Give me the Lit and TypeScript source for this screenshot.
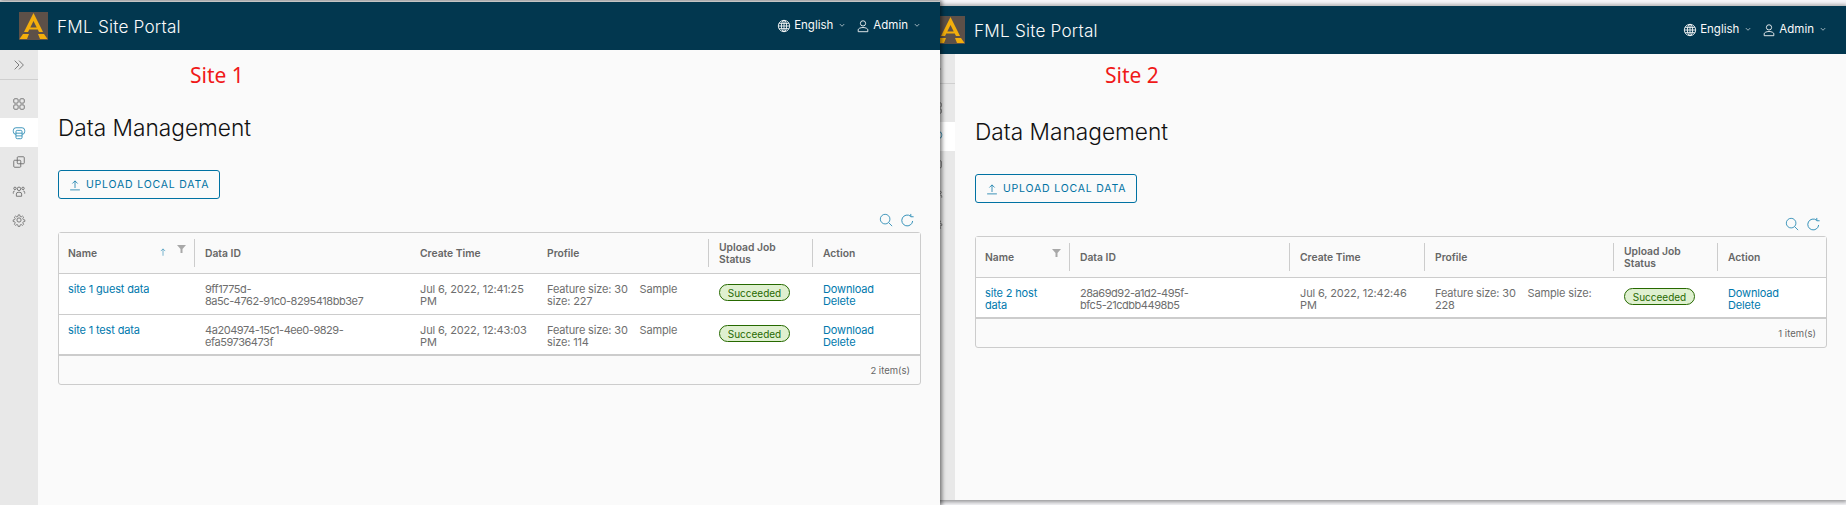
import { LitElement, html, css, svg } from "lit";
import { customElement, property } from "lit/decorators.js";

interface Row {
  name: string[];
  id: string[];
  time: string[];
  profile: string[];
}

interface Site {
  label: string;
  noteLeft: number;
  noteTop: number;
  sorted: boolean;
  columns: string;
  dividers: boolean[];
  rows: Row[];
  count: string;
}

const HEADS = ["Name", "Data ID", "Create Time", "Profile", "Upload Job Status", "Action"];

const SITE_1: Site = {
  label: "Site 1",
  noteLeft: 152,
  noteTop: 11,
  sorted: true,
  columns: "136px 215px 127px 172px 104px 1fr",
  dividers: [true, false, false, true, true, false],
  count: "2 item(s)",
  rows: [
    {
      name: ["site 1 guest data"],
      id: ["9ff1775d-", "8a5c-4762-91c0-8295418bb3e7"],
      time: ["Jul 6, 2022, 12:41:25", "PM"],
      profile: ["Feature size: 30\u00a0\u00a0\u00a0\u00a0Sample", "size: 227"],
    },
    {
      name: ["site 1 test data"],
      id: ["4a204974-15c1-4ee0-9829-", "efa59736473f"],
      time: ["Jul 6, 2022, 12:43:03", "PM"],
      profile: ["Feature size: 30\u00a0\u00a0\u00a0\u00a0Sample", "size: 114"],
    },
  ],
};

const SITE_2: Site = {
  label: "Site 2",
  noteLeft: 150,
  noteTop: 7,
  sorted: false,
  columns: "94px 220px 135px 189px 104px 1fr",
  dividers: [true, true, true, true, true, false],
  count: "1 item(s)",
  rows: [
    {
      name: ["site 2 host", "data"],
      id: ["28a69d92-a1d2-495f-", "bfc5-21cdbb4498b5"],
      time: ["Jul 6, 2022, 12:42:46", "PM"],
      profile: ["Feature size: 30\u00a0\u00a0\u00a0\u00a0Sample size:", "228"],
    },
  ],
};

const icon = (body: unknown, size = 16) => html`<svg
  width=${size}
  height=${size}
  viewBox="0 0 16 16"
  fill="none"
  stroke="currentColor"
  stroke-width="1"
>
  ${body}
</svg>`;

const ICONS = {
  expand: svg`<path d="M3 3l5 5-5 5M8 3l5 5-5 5" />`,
  grid: svg`<rect x="2" y="2" width="5" height="5" rx="1.200" /><rect x="9" y="2" width="5" height="5" rx="1.200" /><rect x="2" y="9" width="5" height="5" rx="1.200" /><rect x="9" y="9" width="5" height="5" rx="1.200" />`,
  data: svg`<path d="M4.500 2h7a3 3 0 0 1 3 3v1.500a3 3 0 0 1-3 3M4.500 2a3 3 0 0 0-3 3v1.500a3 3 0 0 0 3 3" /><rect x="4.500" y="5" width="7" height="9.500" rx="1.500" /><path d="M4.500 8.200h7M4.500 11.300h7" />`,
  copy: svg`<rect x="6" y="2" width="8" height="8" rx="1" /><rect x="2" y="6" width="8" height="8" rx="1" />`,
  users: svg`<circle cx="8" cy="5.500" r="2" /><path d="M5 14v-2.500a2 2 0 0 1 2-2h2a2 2 0 0 1 2 2V14z" /><circle cx="3.400" cy="5" r="1.400" /><circle cx="12.600" cy="5" r="1.400" /><path d="M1.500 11V9.600a1.600 1.600 0 0 1 1.600-1.600M14.500 11V9.600a1.600 1.600 0 0 0-1.600-1.600" />`,
  cog: svg`<circle cx="8" cy="8" r="2.400" /><path d="M7 1.500h2l.4 2 1.300.6 1.800-1.100 1.400 1.400-1.100 1.800.6 1.300 2 .4v2l-2 .4-.6 1.300 1.100 1.800-1.400 1.400-1.800-1.100-1.300.6-.4 2H7l-.4-2-1.300-.6-1.800 1.100-1.400-1.400 1.100-1.800-.6-1.300-2-.4v-2l2-.4.6-1.300L2.100 4.400l1.400-1.400 1.800 1.100 1.300-.6z" transform="translate(.8 .8) scale(.9)" />`,
  globe: svg`<circle cx="8" cy="8" r="6.500" /><ellipse cx="8" cy="8" rx="3" ry="6.500" /><path d="M8 1.500v13M1.500 8h13M2.400 5h11.200M2.400 11h11.200" />`,
  user: svg`<circle cx="8" cy="5" r="3" /><path d="M2.500 14.500v-2.200c0-1.200 2.400-2.600 5.500-2.600s5.500 1.400 5.500 2.600v2.200z" />`,
  chevron: svg`<path d="M4.500 6.500L8 10l3.500-3.500" />`,
  upload: svg`<path d="M8 12V2.500M4.500 6L8 2.500 11.500 6M1.500 14.500h13" />`,
  search: svg`<circle cx="7" cy="7" r="5.500" /><path d="M11 11l4 4" />`,
  refresh: svg`<path d="M13.500 8.500a5.800 5.800 0 1 1-2.200-5.100M11.500 1v3h3" />`,
  arrow: svg`<path d="M8 14V3M4.500 6.500L8 3l3.500 3.500" />`,
};

@customElement("site-window")
export class SiteWindow extends LitElement {
  @property({ attribute: false }) site!: Site;

  static styles = css`
    :host {
      display: flex;
      flex-direction: column;
      background: #fafafa;
      border-top: 1px solid #c4c4c4;
      font-family: Inter, "Noto Sans", sans-serif;
      box-sizing: border-box;
    }
    svg {
      display: block;
      flex: none;
    }
    header {
      display: flex;
      align-items: center;
      height: 48px;
      flex: none;
      padding: 0 18px 0 19px;
      background: #02374f;
      color: #fafafa;
    }
    .logo {
      margin-right: 9px;
    }
    .brand {
      font-size: 17.200px;
      font-weight: 300;
      letter-spacing: 0.2px;
    }
    .menu {
      margin-left: auto;
      display: flex;
      align-items: center;
      font-size: 11.500px;
    }
    .menu-item {
      display: flex;
      align-items: center;
      gap: 3px;
    }
    .menu-item + .menu-item {
      margin-left: 9px;
    }
    .menu-item > span {
      margin-bottom: 2px;
    }
    .chevron {
      margin-left: 1px;
      margin-bottom: 3px;
    }
    .body {
      display: flex;
      flex: 1;
      min-height: 0;
    }
    nav {
      width: 38px;
      flex: none;
      background: #e8e8e8;
      color: #6c6c6c;
    }
    .toggle {
      height: 29px;
      display: flex;
      align-items: center;
      justify-content: center;
      border-bottom: 1px solid #cfcfcf;
      margin-bottom: 9px;
    }
    .nav-item {
      height: 29px;
      display: flex;
      align-items: center;
      justify-content: center;
    }
    .nav-item.active {
      background: #fff;
      color: #2b8cb5;
    }
    main {
      position: relative;
      flex: 1;
      min-width: 0;
      display: flex;
      flex-direction: column;
      align-items: flex-start;
      padding: 60px 19px 0 20px;
    }
    /* red note pasted on top of the screenshot */
    .note {
      position: absolute;
      color: #f01818;
      font: 21px "Noto Sans", sans-serif;
    }
    h1 {
      margin: 0;
      font-size: 22.700px;
      line-height: 36px;
      font-weight: 300;
      color: #111;
    }
    .upload {
      margin-top: 24px;
      height: 29px;
      width: 162px;
      box-sizing: border-box;
      padding: 0 0 0 10px;
      display: flex;
      align-items: center;
      gap: 5px;
      border: 1px solid #0072a3;
      border-radius: 3px;
      background: transparent;
      color: #0072a3;
      font: 400 10.500px Inter, "Noto Sans", sans-serif;
      letter-spacing: 0.8px;
      white-space: nowrap;
    }
    .tools {
      align-self: stretch;
      display: flex;
      justify-content: flex-end;
      align-items: center;
      gap: 7px;
      height: 20px;
      margin-top: 11px;
      padding-right: 6px;
      color: #2b8cb5;
    }
    .grid {
      align-self: stretch;
      margin-top: 2px;
      border: 1px solid #ccc;
      border-radius: 3px;
      font-size: 11px;
      letter-spacing: -0.150px;
      color: #6e6e6e;
    }
    .row {
      display: grid;
      height: 41px;
      box-sizing: border-box;
      border-bottom: 1px solid #ccc;
      background: #fff;
    }
    .row.last {
      border-bottom-width: 2px;
    }
    .row.head {
      background: #fafafa;
      font-size: 10.300px;
      font-weight: 600;
      line-height: 11px;
      letter-spacing: 0;
      color: #666;
    }
    .head .cell {
      position: relative;
      display: flex;
      align-items: center;
      padding-top: 0;
      padding-right: 20px;
    }
    .head .cell.divider::after {
      content: "";
      position: absolute;
      right: 0;
      top: 6px;
      bottom: 6px;
      width: 1px;
      background: #ccc;
    }
    .cell {
      padding: 9px 4px 0 9px;
      line-height: 12px;
      white-space: nowrap;
    }
    .cell + .cell {
      padding-left: 10px;
    }
    .cell div {
      display: block;
    }
    .cell.id {
      letter-spacing: -0.450px;
    }
    .link {
      color: #0079ad;
    }
    .sort {
      position: absolute;
      right: 27px;
      top: 14px;
      color: #2b8cb5;
    }
    .filter {
      position: absolute;
      right: 9px;
      top: 12px;
    }
    .badge {
      display: flex;
      align-items: center;
      justify-content: center;
      width: 71px;
      height: 17px;
      box-sizing: border-box;
      margin-top: 1px;
      border: 1px solid #266900;
      border-radius: 9px;
      background: #dff0d0;
      color: #266900;
      font-size: 10px;
      letter-spacing: 0;
    }
    .foot {
      height: 28px;
      display: flex;
      align-items: center;
      justify-content: flex-end;
      padding-right: 10px;
      font-size: 9.500px;
      letter-spacing: 0;
      color: #666;
    }
  `;

  private lines(items: string[]) {
    return items.map((line) => html`<div>${line}</div>`);
  }

  private renderHead() {
    const s = this.site;
    return html`<div class="row head" style="grid-template-columns:${s.columns}">
      ${HEADS.map(
        (h, i) => html`<div class="cell ${s.dividers[i] ? "divider" : ""}">
          ${i === 4 ? html`<span>Upload Job<br />Status</span>` : h}
          ${i === 0 && s.sorted
            ? html`<span class="sort">${icon(ICONS.arrow, 10)}</span>`
            : ""}
          ${i === 0
            ? html`<svg class="filter" width="9" height="8" viewBox="0 0 9 8">
                <path d="M0 0h9L5.500 4v4h-2V4z" fill="#a8a8a8" />
              </svg>`
            : ""}
        </div>`
      )}
    </div>`;
  }

  private renderRow(r: Row, last: boolean) {
    return html`<div
      class="row ${last ? "last" : ""}"
      style="grid-template-columns:${this.site.columns}"
    >
      <div class="cell link">${this.lines(r.name)}</div>
      <div class="cell id">${this.lines(r.id)}</div>
      <div class="cell">${this.lines(r.time)}</div>
      <div class="cell">${this.lines(r.profile)}</div>
      <div class="cell"><span class="badge">Succeeded</span></div>
      <div class="cell link"><div>Download</div><div>Delete</div></div>
    </div>`;
  }

  render() {
    const s = this.site;
    return html`
      <header>
        <svg class="logo" width="29" height="28" viewBox="0 0 29 28">
          <rect width="29" height="28" fill="#5d5048" />
          <path
            d="M14.500 1L24 20H20L14.500 9 9 20H5zM8 15.500H21L22 17.500H7zM4 22H10L8 27H.5zM19 22H25L28.500 27H21z"
            fill="#f3ae0c"
          />
        </svg>
        <span class="brand">FML Site Portal</span>
        <div class="menu">
          <div class="menu-item">
            ${icon(ICONS.globe, 14)}<span>English</span>
            <span class="chevron">${icon(ICONS.chevron, 10)}</span>
          </div>
          <div class="menu-item">
            ${icon(ICONS.user, 14)}<span>Admin</span>
            <span class="chevron">${icon(ICONS.chevron, 10)}</span>
          </div>
        </div>
      </header>
      <div class="body">
        <nav>
          <div class="toggle">${icon(ICONS.expand, 14)}</div>
          <div class="nav-item">${icon(ICONS.grid, 14)}</div>
          <div class="nav-item active">${icon(ICONS.data, 14)}</div>
          <div class="nav-item">${icon(ICONS.copy, 14)}</div>
          <div class="nav-item">${icon(ICONS.users, 14)}</div>
          <div class="nav-item">${icon(ICONS.cog, 14)}</div>
        </nav>
        <main>
          <div class="note" style="left:${s.noteLeft}px;top:${s.noteTop}px">${s.label}</div>
          <h1>Data Management</h1>
          <button class="upload">${icon(ICONS.upload, 12)}UPLOAD LOCAL DATA</button>
          <div class="tools">${icon(ICONS.search, 14)}${icon(ICONS.refresh, 15)}</div>
          <div class="grid">
            ${this.renderHead()}
            ${s.rows.map((r, i) => this.renderRow(r, i === s.rows.length - 1))}
            <div class="foot">${s.count}</div>
          </div>
        </main>
      </div>
    `;
  }
}

@customElement("app-root")
export class AppRoot extends LitElement {
  static styles = css`
    :host {
      display: block;
      position: relative;
      width: 1846px;
      height: 505px;
      overflow: hidden;
      background: #f5f5f8;
    }
    site-window {
      position: absolute;
    }
    .first {
      left: 0;
      top: 1px;
      width: 940px;
      height: 504px;
      z-index: 2;
      box-shadow: 1px 0 4px 1px rgba(0, 0, 0, 0.5);
    }
    .second {
      left: 917px;
      top: 5px;
      width: 929px;
      height: 495px;
      z-index: 1;
      box-shadow: 0 1px 4px 1px rgba(0, 0, 0, 0.4);
    }
  `;

  render() {
    return html`
      <site-window class="first" .site=${SITE_1}></site-window>
      <site-window class="second" .site=${SITE_2}></site-window>
    `;
  }
}
